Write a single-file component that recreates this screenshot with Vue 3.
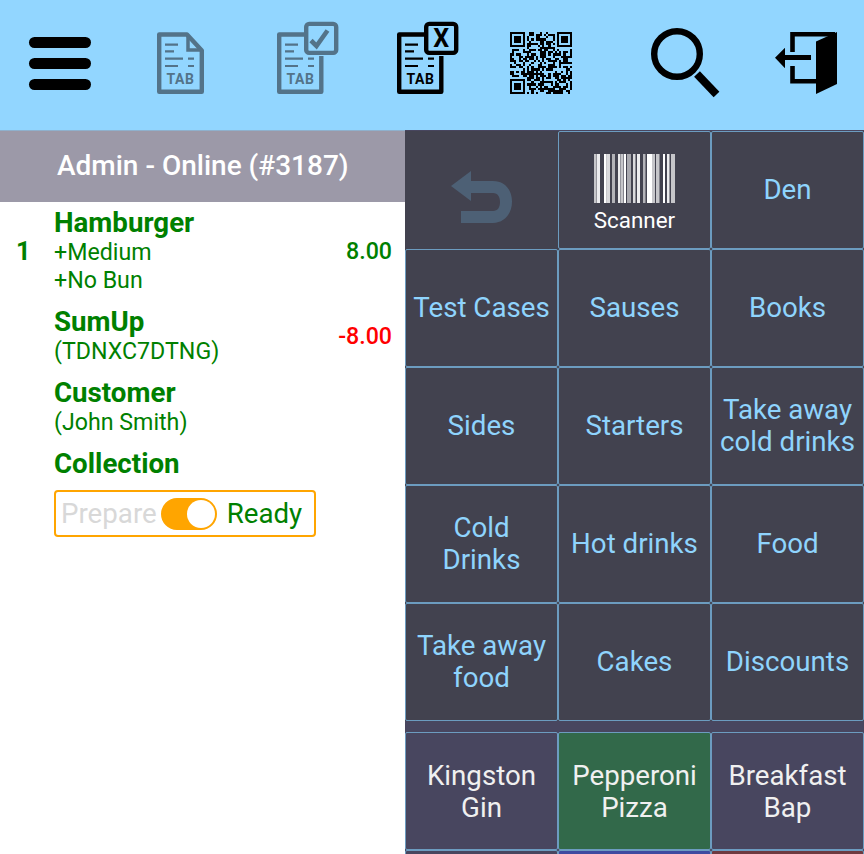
<script setup>
// 顶部按钮下面的分类和商品
const categories = [
  ['Test Cases'], ['Sauses'], ['Books'],
  ['Sides'], ['Starters'], ['Take away', 'cold drinks'],
  ['Cold', 'Drinks'], ['Hot drinks'], ['Food'],
  ['Take away', 'food'], ['Cakes'], ['Discounts']
]

const products = [
  { lines: ['Kingston', 'Gin'], tone: '' },
  { lines: ['Pepperoni', 'Pizza'], tone: 'green' },
  { lines: ['Breakfast', 'Bap'], tone: '' },
  { lines: [], tone: '' },
  { lines: [], tone: 'blue' },
  { lines: [], tone: 'red' }
]

// 条形码: x, 宽, 透明度
const bars = [
  [0, 2, 0.7], [2.5, 3.5, 0.9], [10, 2.5, 1], [12.5, 3.5, 0.8], [18, 3, 0.6], [24, 2.5, 0.9],
  [27, 2.5, 0.7], [30, 2, 1], [33, 4, 0.55], [39, 2.5, 0.8], [43, 3, 0.9], [49, 2.5, 0.6],
  [53, 5, 1], [58, 3, 0.7], [62, 3.5, 0.7], [69, 2, 1], [73, 2.5, 0.9], [77, 4, 0.7]
]

// 二维码: 固定种子生成的点阵 + 三个定位角
const qrSize = 29
const qrCells = []
let seed = 3187
const inFinder = (c, r, ox, oy) => c >= ox && c < ox + 8 && r >= oy && r < oy + 8
for (let r = 0; r < qrSize; r++) {
  for (let c = 0; c < qrSize; c++) {
    if (inFinder(c, r, 0, 0) || inFinder(c, r, 21, 0) || inFinder(c, r, 0, 21)) continue
    seed = (seed * 1103515245 + 12345) % 2147483648
    if ((seed >> 16) % 100 < 55) qrCells.push({ c, r })
  }
}
const finders = [[0, 0], [22, 0], [0, 22]]
</script>

<template>
  <div class="screen">
    <header class="topbar">
      <svg class="ico menu" viewBox="0 0 62 90">
        <rect x="0" y="17" width="62" height="11" rx="5.5" />
        <rect x="0" y="38" width="62" height="11" rx="5.5" />
        <rect x="0" y="59" width="62" height="11" rx="5.5" />
      </svg>

      <svg class="ico doc muted" viewBox="0 0 47 90">
        <path class="line" d="M2.2 14.5H30L44.8 30.5V71.8H2.2Z" stroke-width="4.4" stroke-linejoin="round" />
        <path class="line" d="M31 16V30H44" stroke-width="3.5" />
        <path class="line" stroke-width="2.2" d="M8 24.7H21M8 31.3H17M8 38.7H26M31 38.7H37M8 46H21M31 46H37" />
        <text class="tab" x="23.5" y="64">TAB</text>
      </svg>

      <svg class="ico doc-check muted" viewBox="0 0 62 90">
        <path class="line" d="M30 14.500H2.200V71.800H44.300V36" stroke-width="4.4" stroke-linejoin="round" />
        <path class="line" stroke-width="2.2" d="M8 24.7H21M8 31.3H17M8 38.7H26M31 38.7H37M8 46H21M31 46H37" />
        <text class="tab" x="23.5" y="64">TAB</text>
        <rect class="line" x="29.200" y="3.900" width="30" height="29" rx="3" stroke-width="4.4" />
        <path class="line" d="M34 20.5L39.5 26L50.5 10.5" stroke-width="4.6" />
      </svg>

      <svg class="ico doc-cross" viewBox="0 0 62 90">
        <path class="line" d="M30 14.500H2.200V71.800H44.300V36" stroke-width="4.4" stroke-linejoin="round" />
        <path class="line" stroke-width="2.2" d="M8 24.7H21M8 31.3H17M8 38.7H26M31 38.7H37M8 46H21M31 46H37" />
        <text class="tab" x="23.5" y="64">TAB</text>
        <rect class="line" x="29.200" y="3.900" width="30" height="29" rx="3" stroke-width="4.4" />
        <text class="cross" x="44.2" y="27">X</text>
      </svg>

      <svg class="ico qr" viewBox="0 0 29 42" shape-rendering="crispEdges">
        <g v-for="f in finders" :key="f[0] + '-' + f[1]">
          <path :d="`M${f[0]} ${f[1] + 5.6}h7v7h-7z M${f[0] + 1} ${f[1] + 6.6}v5h5v-5z`" fill-rule="evenodd" />
          <rect :x="f[0] + 2" :y="f[1] + 7.6" width="3" height="3" />
        </g>
        <rect v-for="q in qrCells" :key="q.c + '_' + q.r" :x="q.c" :y="q.r + 5.6" width="1" height="1" />
      </svg>

      <svg class="ico search" viewBox="0 0 70 90">
        <circle class="line" cx="26" cy="34" r="22.8" stroke-width="6.4" />
        <path class="line" d="M46 54L65.5 74.5" stroke-width="8" />
      </svg>

      <svg class="ico exit" viewBox="0 0 62 90">
        <path class="line" d="M17.5 32V14.2H60M17.5 46V61.2H41" stroke-width="4.6" />
        <path d="M0 37.7L10 27.7V35H36V40H10V48.3Z" />
        <path d="M41 21.5L62 12V64L41 74Z" />
      </svg>
    </header>

    <main class="body">
      <section class="ticket">
        <div class="ticket-head">Admin - Online (#3187)</div>
        <div class="ticket-row first">
          <span class="qty">1</span>
          <div class="desc">
            <div class="name">Hamburger</div>
            <div class="sub">+Medium</div>
            <div class="sub">+No Bun</div>
          </div>
          <span class="price">8.00</span>
        </div>
        <div class="ticket-row">
          <span class="qty"></span>
          <div class="desc">
            <div class="name">SumUp</div>
            <div class="sub">(TDNXC7DTNG)</div>
          </div>
          <span class="price minus">-8.00</span>
        </div>
        <div class="ticket-row">
          <span class="qty"></span>
          <div class="desc">
            <div class="name">Customer</div>
            <div class="sub">(John Smith)</div>
          </div>
        </div>
        <div class="ticket-row">
          <span class="qty"></span>
          <div class="desc">
            <div class="name">Collection</div>
            <div class="status">
              <span class="off">Prepare</span>
              <span class="switch"><i></i></span>
              <span class="on">Ready</span>
            </div>
          </div>
        </div>
      </section>

      <section class="pads">
        <div class="grid top">
          <button class="pad back-pad">
            <svg class="back" viewBox="0 0 62 54">
              <path d="M0 23L20 8V18H42C53 18 61 26 61 38.500C61 51 53 60 42 60H10V48H42C47 48 49 44 49 39C49 34 47 30 42 30H20V38Z" />
            </svg>
          </button>
          <button class="pad scan-pad">
            <svg class="barcode" viewBox="0 0 81 49" preserveAspectRatio="none">
              <rect v-for="b in bars" :key="b[0]" :x="b[0]" y="0" :width="b[1]" height="49" :opacity="b[2]" />
            </svg>
            <span class="scan-label">Scanner</span>
          </button>
          <button class="pad"><span>Den</span></button>
          <button v-for="cat in categories" :key="cat.join()" class="pad">
            <span v-for="l in cat" :key="l">{{ l }}</span>
          </button>
        </div>
        <div class="grid products">
          <button v-for="(p, i) in products" :key="i" class="pad item" :class="p.tone">
            <span v-for="l in p.lines" :key="l">{{ l }}</span>
          </button>
        </div>
      </section>
    </main>
  </div>
</template>

<style>
html, body { margin: 0; background: #fff; }
</style>

<style scoped>
.screen {
  width: 864px;
  height: 854px;
  overflow: hidden;
  font-family: Roboto, "Noto Sans", sans-serif;
}
.topbar {
  height: 130px;
  background: #92d6ff;
  display: flex;
  align-items: flex-start;
  padding-top: 20px;
  padding-left: 29px;
  box-sizing: border-box;
}
.ico { height: 90px; flex: none; fill: #000; color: #000; overflow: visible; }
.menu { width: 62px; }
.doc { width: 47px; margin-left: 66px; }
.doc-check { width: 62px; margin-left: 73px; }
.doc-cross { width: 62px; margin-left: 58px; }
.qr { width: 62px; margin-left: 51px; }
.search { width: 70px; margin-left: 79px; }
.exit { width: 62px; margin-left: 54px; }
.muted { color: #537389; fill: #537389; }
.line { fill: none; stroke: currentColor; stroke-linecap: butt; }
.tab {
  font-family: Roboto, sans-serif;
  font-weight: 700;
  font-size: 14px;
  letter-spacing: 0.6px;
  text-anchor: middle;
  fill: currentColor;
}
.cross {
  font-family: Roboto, sans-serif;
  font-weight: 700;
  font-size: 25px;
  text-anchor: middle;
  fill: currentColor;
}

.body { display: flex; height: 724px; }
.ticket { width: 405px; flex: none; background: #fff; }
.ticket-head {
  border-top: 1px solid #8fb0cc;
  height: 71px;
  background: #9c99a8;
  color: #fff;
  font-size: 28px;
  font-weight: 500;
  line-height: 69px;
  padding-left: 57px;
}
.ticket-row { display: flex; padding-right: 13px; margin-bottom: 13px; align-items: center; }
.ticket-row.first { margin-top: 6px; }
.qty { width: 54px; flex: none; padding-left: 16px; box-sizing: border-box; color: #008000; font-size: 25.5px; font-weight: 700; }
.desc { flex: 1; color: #008000; }
.name { font-size: 27.7px; font-weight: 700; line-height: 30px; }
.sub { font-size: 23.2px; line-height: 28px; }
.price { color: #008000; font-size: 23.2px; font-weight: 500; }
.price.minus { color: #ff0000; }
.status {
  display: inline-flex;
  align-items: center;
  margin-top: 11px;
  height: 47px;
  width: 262px;
  box-sizing: border-box;
  border: 2px solid #ffa500;
  border-radius: 4px;
  padding-left: 5px;
  font-size: 27.7px;
}
.off { color: #d8d8d8; }
.on { color: #008000; }
.switch {
  width: 56px;
  height: 32px;
  flex: none;
  box-sizing: border-box;
  border: 2px solid #ffa500;
  background: #ffa500;
  border-radius: 16px;
  margin: 0 10px 0 4px;
  display: flex;
  justify-content: flex-end;
}
.switch i { width: 28px; height: 28px; border-radius: 50%; background: #fff; }

.pads { flex: 1; background: #48465f; }
.grid {
  display: grid;
  grid-template-columns: repeat(3, 153px);
}
.top { grid-auto-rows: 118px; margin-top: 1px; background: #42424f; }
.products { grid-auto-rows: 118px; margin-top: 11px; }
.pad {
  margin: 0;
  padding: 0;
  font: inherit;
  font-size: 27.7px;
  line-height: 32px;
  color: #8fd4fd;
  background: #42424f;
  border: 1px solid #6c9cc0;
  border-radius: 2px;
  display: flex;
  flex-direction: column;
  align-items: center;
  justify-content: center;
}
.back-pad { border-color: transparent; }
.back { width: 62px; height: 54px; fill: #4d6075; overflow: visible; }
.scan-pad { color: #fff; padding-top: 7px; }
.barcode { width: 81px; height: 49px; fill: #fff; margin-bottom: 3px; }
.scan-label { font-size: 22.4px; line-height: 28px; }
.item { color: #f0f0f0; background: #48465f; padding-top: 1px; }
.item.green { background: #32694a; }
.item.blue { background: #3f4aa0; }
.item.red { background: #6e3a40; }
</style>
